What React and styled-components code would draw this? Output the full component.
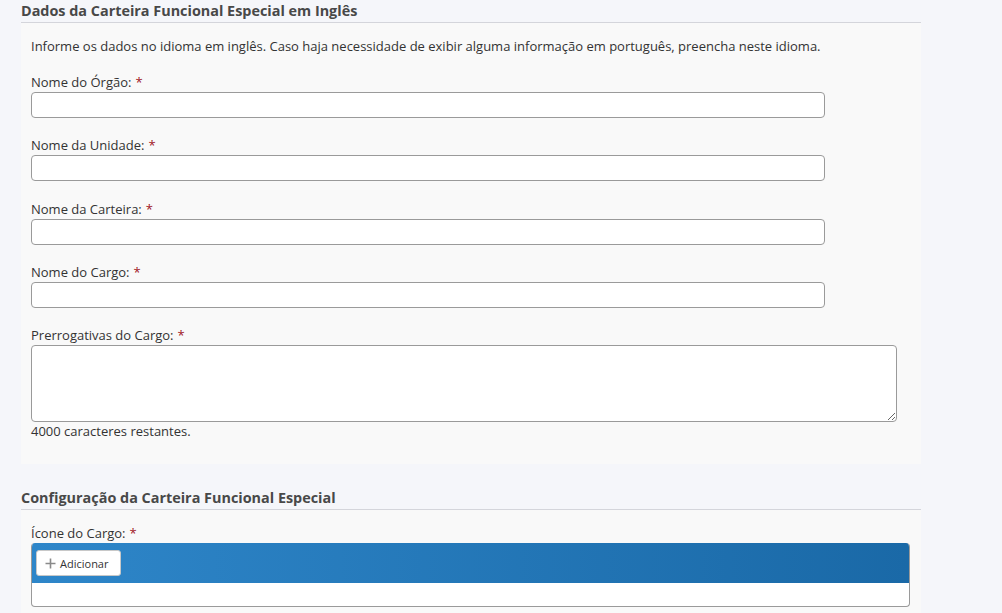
import React from "react";
import styled, { createGlobalStyle } from "styled-components";

const Global = createGlobalStyle`
  body {
    margin: 0;
    background: #f5f6fa;
    font-family: "Open Sans", "Liberation Sans", sans-serif;
    color: #333;
  }
`;

const Page = styled.div`
  width: 900px;
  padding-left: 21px;
`;

const SectionTitle = styled.h3`
  margin: ${(p) => (p.$first ? "0" : "23px 0 0")};
  height: 22px;
  line-height: 22px;
  font-size: 14.4px;
  font-weight: 700;
  color: #484848;
  border-bottom: 1px solid #d4d5db;
`;

const Panel = styled.div`
  background: #f9f9f9;
  padding: 14px 10px ${(p) => p.$bottom || "24px"};
`;

const Intro = styled.p`
  margin: 0 0 18px;
  font-size: 13px;
  line-height: 18px;
`;

const Field = styled.div`
  margin-bottom: ${(p) => (p.$last ? "0" : "18.25px")};
`;

const Label = styled.label`
  display: block;
  font-size: 13px;
  line-height: 18px;
  margin-bottom: 1px;
`;

const Req = styled.span`
  color: #a0141e;
  margin-left: 4px;
`;

const Input = styled.input`
  display: block;
  box-sizing: border-box;
  width: 794px;
  height: 26px;
  border: 1px solid #9a9a9a;
  border-radius: 4px;
  background: #fff;
  margin: 0;
`;

const TextArea = styled.textarea`
  display: block;
  box-sizing: border-box;
  width: 866px;
  height: 77px;
  border: 1px solid #9a9a9a;
  border-radius: 4px;
  background: #fff;
  margin: 0;
`;

const Hint = styled.div`
  font-size: 13px;
  line-height: 18px;
`;

const Upload = styled.div`
  width: 879px;
  box-sizing: border-box;
  border: 1px solid #9a9a9a;
  border-top: none;
  border-radius: 4px;
  overflow: hidden;
  background: #fff;
`;

const UploadBar = styled.div`
  height: 40px;
  display: flex;
  align-items: center;
  padding-left: 4px;
  background: linear-gradient(to right, #2e86c9, #1a69a7);
`;

const AddButton = styled.button`
  display: flex;
  align-items: center;
  gap: 4px;
  height: 26px;
  width: 85px;
  padding: 0 8px;
  border: 1px solid #c8c8c8;
  border-radius: 3px;
  background: #fff;
  font-family: "Open Sans", "Liberation Sans", sans-serif;
  font-size: 11px;
  color: #333;
`;

const UploadBody = styled.div`
  height: 23px;
`;

const fields = ["Nome do Órgão:", "Nome da Unidade:", "Nome da Carteira:", "Nome do Cargo:"];

export default function App() {
  return (
    <Page>
      <Global />
      <SectionTitle $first>Dados da Carteira Funcional Especial em Inglês</SectionTitle>
      <Panel>
        <Intro>
          Informe os dados no idioma em inglês. Caso haja necessidade de exibir alguma informação em
          português, preencha neste idioma.
        </Intro>
        {fields.map((f) => (
          <Field key={f}>
            <Label>
              {f}
              <Req>*</Req>
            </Label>
            <Input />
          </Field>
        ))}
        <Field $last>
          <Label>
            Prerrogativas do Cargo:<Req>*</Req>
          </Label>
          <TextArea />
          <Hint>4000 caracteres restantes.</Hint>
        </Field>
      </Panel>
      <SectionTitle>Configuração da Carteira Funcional Especial</SectionTitle>
      <Panel $bottom="10px">
        <Label>
          Ícone do Cargo:<Req>*</Req>
        </Label>
        <Upload>
          <UploadBar>
            <AddButton>
              <svg width="11" height="11" viewBox="0 0 11 11">
                <path d="M5.5 0.5v10M0.5 5.5h10" stroke="#8a8a8a" strokeWidth="1.6" />
              </svg>
              Adicionar
            </AddButton>
          </UploadBar>
          <UploadBody />
        </Upload>
      </Panel>
    </Page>
  );
}
